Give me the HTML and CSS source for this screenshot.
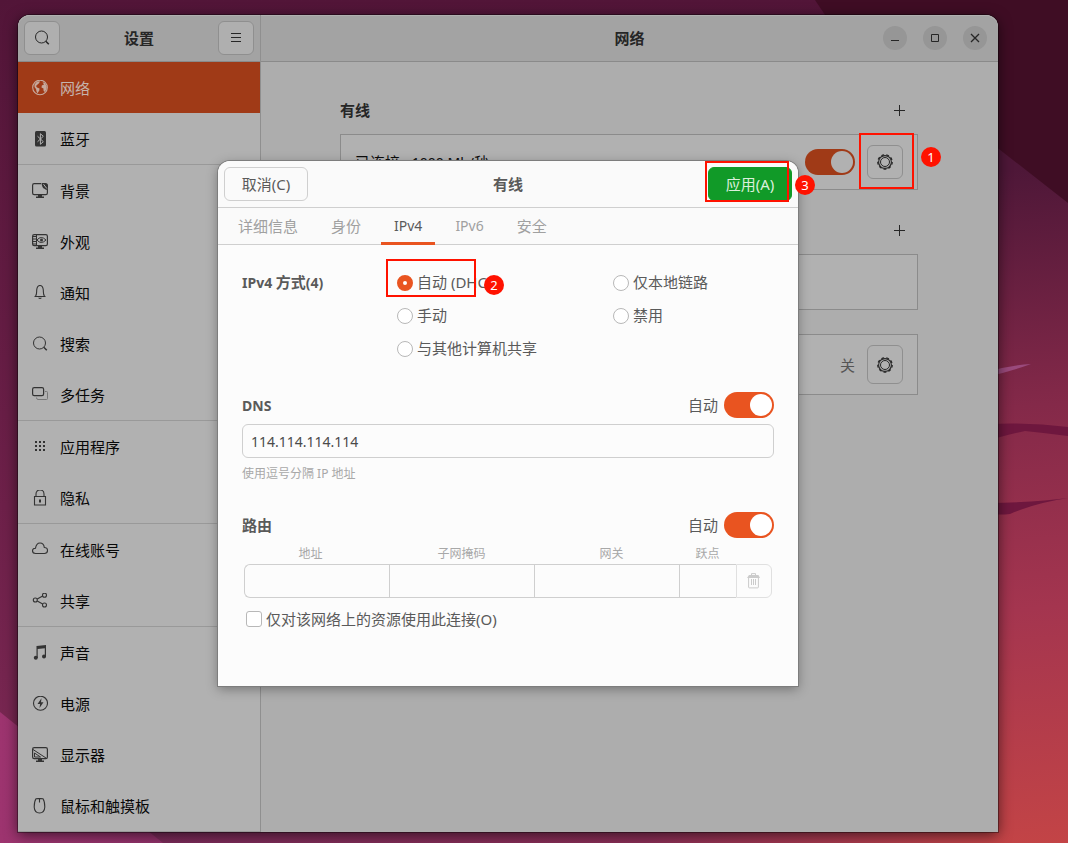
FILE: index.html
```html
<!DOCTYPE html>
<html lang="zh-CN">
<head>
<meta charset="utf-8">
<title>设置</title>
<link rel="stylesheet" href="styles.css">
</head>
<body>
<svg class="symbols" aria-hidden="true">
  <symbol id="gear" viewBox="0 0 16 16">
    <circle cx="8" cy="8" r="6.4" fill="none" stroke="currentColor" stroke-width="1.1"/>
    <circle cx="8" cy="8" r="4.5" fill="none" stroke="currentColor" stroke-width="1"/>
    <circle cx="8" cy="8" r="7.2" fill="none" stroke="currentColor" stroke-width="1.3" stroke-dasharray="2.8 2.226" stroke-dashoffset="-9.9"/>
  </symbol>
  <symbol id="search" viewBox="0 0 16 16">
    <g fill="none" stroke="currentColor"><circle cx="7.500" cy="7" r="6"/><path d="M11.800 11.300l3 3" stroke-width="1.500"/></g>
  </symbol>
</svg>
<div class="desktop">
  <svg class="wallpaper" viewBox="0 0 1068 843" preserveAspectRatio="xMidYMid slice" aria-hidden="true">
    <defs>
      <linearGradient id="base" x1="0" y1="0" x2="0" y2="1"><stop offset="0" stop-color="#521538"/><stop offset=".6" stop-color="#6d2049"/><stop offset="1" stop-color="#7d2a55"/></linearGradient>
      <linearGradient id="right" gradientUnits="userSpaceOnUse" x1="1010" y1="170" x2="1068" y2="843"><stop offset="0" stop-color="#4e1738"/><stop offset=".35" stop-color="#842949"/><stop offset=".65" stop-color="#a4354f"/><stop offset="1" stop-color="#c34446"/></linearGradient>
      <linearGradient id="bottom" x1="0" y1="0" x2="1" y2="0"><stop offset="0" stop-color="#782a59"/><stop offset=".6" stop-color="#8a2e56"/><stop offset="1" stop-color="#c34446"/></linearGradient>
      <linearGradient id="corner" x1="0" y1="0" x2="1" y2="0"><stop offset="0" stop-color="#9d346f"/><stop offset="1" stop-color="#91316a"/></linearGradient>
    </defs>
    <rect width="1068" height="843" fill="url(#base)"/>
    <path d="M815 0H1068V230H970Z" fill="#3f0d24"/>
    <path d="M100 815H1010V843H100Z" fill="url(#bottom)"/>
    <path d="M990 142L1068 203V843H990Z" fill="url(#right)"/>
    <path d="M0 712L163 843H0Z" fill="url(#corner)"/>
    <path d="M990 371Q1012 365 1031 364Q1012 371 990 376Z" fill="#9a4a7c"/>
    <path d="M990 424Q1030 422 1068 427V436Q1045 433 1025 431Q1010 434 990 440Z" fill="#6e173e"/>
    <path d="M990 503Q1040 502 1068 498Q1035 503 1010 514Q1000 515 990 514Z" fill="#6e173e"/>
  </svg>

  <div class="window">
    <aside class="sidebar">
      <header class="titlebar side-title">
        <button class="icon-button" aria-label="搜索"><svg class="icon"><use href="#search"/></svg></button>
        <h1 class="title">设置</h1>
        <button class="icon-button" aria-label="菜单"><svg class="icon" viewBox="0 0 16 16"><path d="M3 3.500h10M3 7.500h10M3 11.500h10" stroke="currentColor"/></svg></button>
      </header>
      <nav class="nav">
        <a class="nav-item active" href="#network"><svg class="icon" viewBox="0 0 16 16"><circle cx="8" cy="7.500" r="7.300" fill="none" stroke="currentColor" stroke-width="1.100"/><path fill="currentColor" d="M2.500 4.500L5 1.500 8 1.200 7 3.200 5.500 4.500 4 6 5 7.500 7.500 8.500 7.300 10.500 6 12.500 5.500 13.500 4.500 11.500 4 9 2.500 7ZM10.500 2.200L13 3 14.700 6.500 14.500 9.500 12.500 12 11.500 10.500 11.500 8.500 9.500 7.500 9.800 5.500 12 4.500Z"/></svg>网络</a>
        <a class="nav-item" href="#bluetooth"><svg class="icon" viewBox="0 0 16 16"><rect x="3" width="11" height="15.500" rx="1.500" fill="currentColor"/><path d="M5.500 5.200l5.800 5.500-2.900 2.600V2.700l2.900 2.600-5.800 5.500" fill="none" stroke="#b1b1b1"/></svg>蓝牙</a>
        <hr class="nav-separator">
        <a class="nav-item" href="#background"><svg class="icon" viewBox="0 0 16 16"><path d="M9 .6H2.200Q.6.600.6 2.200V10Q.6 11.600 2.200 11.600H13.800Q15.400 11.600 15.400 10V7" fill="none" stroke="currentColor" stroke-width="1.200"/><path d="M9.500 0H13.500Q16 0 16 2.500V7Q13.500 7 12.500 5.800 10 5 9.500 0ZM4 13.500h8V15H4ZM6 11.500h4v2.500H6Z" fill="currentColor"/><path d="M11.500 1.200l3.300 4.300" stroke="#b1b1b1"/></svg>背景</a>
        <a class="nav-item" href="#appearance"><svg class="icon" viewBox="0 0 16 16"><rect x=".6" y=".6" width="14.800" height="11" rx="1.600" fill="none" stroke="currentColor" stroke-width="1.200"/><path d="M1 2.500h3M1 5h3M1 7.500h3M1 10h3M4.500 1v11M5 6q4-5 9 0-5 5-9 0" fill="none" stroke="currentColor"/><circle cx="9.500" cy="6" r="1.500" fill="currentColor"/><path d="M4 13.500h8V15H4ZM6 12h4v2H6Z" fill="currentColor"/></svg>外观</a>
        <a class="nav-item" href="#notifications"><svg class="icon" viewBox="0 0 16 16"><path d="M2.500 11.500h11M3.500 11C5 9.500 4.500 7.500 4.700 5 5 2 6 .5 8 .5s3 1.500 3.300 4.500C11.500 7.500 11 9.500 12.500 11" fill="none" stroke="currentColor" stroke-width="1.100"/><path d="M6 12.800h4q-2 2.500-4 0" fill="currentColor"/></svg>通知</a>
        <a class="nav-item" href="#search-panel"><svg class="icon"><use href="#search"/></svg>搜索</a>
        <a class="nav-item" href="#multitasking"><svg class="icon" viewBox="0 0 16 16"><rect x=".6" y=".6" width="11" height="8" rx="1.600" fill="none" stroke="currentColor" stroke-width="1.200"/><path d="M13 4.500h1.500q1 0 1 1v6q0 1-1 1H6q-1.500 0-1.500-2" fill="none" stroke="#777"/></svg>多任务</a>
        <hr class="nav-separator">
        <a class="nav-item" href="#apps"><svg class="icon" viewBox="0 0 16 16"><path d="M3 3h11M3 7h11M3 11h11" stroke="currentColor" stroke-width="2" stroke-dasharray="2 2"/></svg>应用程序</a>
        <a class="nav-item" href="#privacy"><svg class="icon" viewBox="0 0 16 16"><path d="M2.500 6.500h11v8.500h-11ZM4 6.500V4C4 1.500 5.500 0 8 0S12 1.500 12 4V6.500" fill="none" stroke="currentColor" stroke-width="1.100"/><path d="M7 9.500h2v3H7Z" fill="currentColor"/></svg>隐私</a>
        <hr class="nav-separator">
        <a class="nav-item" href="#accounts"><svg class="icon" viewBox="0 0 16 16"><path d="M3.500 11.500C1.500 11.500.5 10.300.5 8.800S1.700 6.200 3.500 6.200C4 3 5.500 1 8 1s4 1.800 4.300 4.500c2 0 3.200 1.200 3.200 3s-1.200 3-3 3Z" fill="none" stroke="currentColor" stroke-width="1.100"/></svg>在线账号</a>
        <a class="nav-item" href="#sharing"><svg class="icon" viewBox="0 0 16 16"><g fill="none" stroke="currentColor" stroke-width="1.100"><circle cx="3.300" cy="7" r="2"/><circle cx="12.500" cy="2.200" r="2"/><circle cx="12.500" cy="12" r="2"/><path d="M5.200 6l5.500-3M5.200 8l5.500 3"/></g></svg>共享</a>
        <hr class="nav-separator">
        <a class="nav-item" href="#sound"><svg class="icon" viewBox="0 0 16 16"><path d="M4.500 1l9.500-1v12h-1.200V3.200L5.700 4v9H4.500Z" fill="currentColor"/><circle cx="3.800" cy="12.700" r="2" fill="currentColor"/><circle cx="12" cy="11.500" r="2" fill="currentColor"/></svg>声音</a>
        <a class="nav-item" href="#power"><svg class="icon" viewBox="0 0 16 16"><circle cx="8.500" cy="7.200" r="7" fill="none" stroke="currentColor" stroke-width="1.100"/><path d="M9.500 2.200L5.500 8h2.600L7.500 12l4-5.800H9Z" fill="currentColor"/></svg>电源</a>
        <a class="nav-item" href="#displays"><svg class="icon" viewBox="0 0 16 16"><rect x=".6" y=".6" width="14.800" height="11" rx="1.600" fill="none" stroke="currentColor" stroke-width="1.200"/><path d="M1 2.500l13 8.500M2.500 6v4h6Z" fill="none" stroke="currentColor"/><path d="M4 13.500h8V15H4ZM6 12h4v2H6Z" fill="currentColor"/></svg>显示器</a>
        <a class="nav-item" href="#mouse"><svg class="icon" viewBox="0 0 16 16"><path d="M4 .8Q7.500.2 11 .8 12.800 3.500 12.800 9 12.500 15 7.500 15T2.200 9Q2.200 3.500 4 .8ZM7.500.5v4" fill="none" stroke="currentColor" stroke-width="1.100"/></svg>鼠标和触摸板</a>
        <hr class="nav-separator">
      </nav>
    </aside>

    <main class="main">
      <header class="titlebar main-title">
        <h2 class="title">网络</h2>
        <div class="controls">
          <button class="control" aria-label="最小化"><svg class="icon" viewBox="0 0 16 16"><path d="M4 10.500h8" stroke="currentColor"/></svg></button>
          <button class="control" aria-label="最大化"><svg class="icon" viewBox="0 0 16 16"><path d="M4.500 4.500h7v7h-7Z" fill="none" stroke="currentColor"/></svg></button>
          <button class="control" aria-label="关闭"><svg class="icon" viewBox="0 0 16 16"><path d="M4 4l8 8M12 4l-8 8" stroke="currentColor" stroke-width="1.300"/></svg></button>
        </div>
      </header>
      <div class="panel">
        <div class="group-head">
          <h3 class="group-title">有线</h3>
          <button class="add" aria-label="添加有线连接"><svg class="icon" viewBox="0 0 16 16"><path d="M2 8.500h11M7.500 3v11" stroke="currentColor"/></svg></button>
        </div>
        <div class="device">
          <span class="device-name">已连接<span class="latin"> - 1000 Mb/</span>秒</span>
          <input class="switch dimmed" type="checkbox" role="switch" aria-label="有线" checked>
          <span class="marked">
            <button class="gear-button" aria-label="有线选项"><svg class="icon"><use href="#gear"/></svg></button>
            <span class="mark mark-gear"></span><span class="badge badge-gear">1</span>
          </span>
        </div>
        <div class="group-head second">
          <button class="add" aria-label="添加连接"><svg class="icon" viewBox="0 0 16 16"><path d="M2 8.500h11M7.500 3v11" stroke="currentColor"/></svg></button>
        </div>
        <div class="device"></div>
        <div class="device proxy">
          <span class="state">关</span>
          <button class="gear-button" aria-label="选项"><svg class="icon"><use href="#gear"/></svg></button>
        </div>
      </div>
    </main>

    <section class="dialog" role="dialog" aria-labelledby="dialog-title">
      <header class="dialog-head">
        <button class="button">取消(C)</button>
        <h2 class="title" id="dialog-title">有线</h2>
        <span class="marked apply-slot">
          <button class="button apply">应用(A)</button>
          <span class="mark mark-apply"></span><span class="badge badge-apply">3</span>
        </span>
      </header>
      <div class="tabs" role="tablist">
        <button class="tab" role="tab">详细信息</button>
        <button class="tab" role="tab">身份</button>
        <button class="tab latin selected" role="tab" aria-selected="true">IPv4</button>
        <button class="tab latin" role="tab">IPv6</button>
        <button class="tab" role="tab">安全</button>
      </div>
      <div class="dialog-body">
        <div class="methods" role="radiogroup" aria-labelledby="method-label">
          <h3 class="label" id="method-label"><span class="latin">IPv4 </span>方式<span class="latin">(4)</span></h3>
          <div class="marked">
            <label class="option short"><input class="radio" type="radio" name="method" checked>自动 (DHC</label>
            <span class="mark mark-auto"></span><span class="badge badge-auto">2</span>
          </div>
          <label class="option"><input class="radio" type="radio" name="method">仅本地链路</label>
          <label class="option manual"><input class="radio" type="radio" name="method">手动</label>
          <label class="option"><input class="radio" type="radio" name="method">禁用</label>
          <label class="option manual"><input class="radio" type="radio" name="method">与其他计算机共享</label>
        </div>

        <div class="field-head">
          <h3 class="label latin">DNS</h3>
          <label class="auto">自动<input class="switch" type="checkbox" role="switch" checked></label>
        </div>
        <input class="entry" type="text" value="114.114.114.114" aria-label="DNS" aria-describedby="dns-hint">
        <p class="hint" id="dns-hint">使用逗号分隔 IP 地址</p>

        <div class="field-head">
          <h3 class="label">路由</h3>
          <label class="auto">自动<input class="switch" type="checkbox" role="switch" checked></label>
        </div>
        <table class="routes">
          <colgroup><col><col><col><col class="metric-col"><col class="delete-col"></colgroup>
          <thead><tr><th class="lead">地址</th><th>子网掩码</th><th class="trail">网关</th><th>跃点</th><td></td></tr></thead>
          <tbody><tr>
            <td><input class="cell first" type="text" aria-label="地址"></td>
            <td><input class="cell" type="text" aria-label="子网掩码"></td>
            <td><input class="cell" type="text" aria-label="网关"></td>
            <td><input class="cell" type="text" aria-label="跃点"></td>
            <td><button class="delete" aria-label="删除" disabled><svg class="icon" viewBox="0 0 16 16"><path d="M5.500 2.500V.6h4v1.900M2.600 5v9q0 .9.900.9h8q.9 0 .9-.9V5M5.500 6v6M7.500 6v6M9.500 6v6" fill="none" stroke="currentColor"/><path d="M3 2h9.500L14 5H1Z" fill="currentColor"/></svg></button></td>
          </tr></tbody>
        </table>
        <label class="check-row"><input class="check" type="checkbox">仅对该网络上的资源使用此连接(O)</label>
      </div>
    </section>
  </div>
</div>
</body>
</html>
```
FILE: styles.css
```css
* { box-sizing: border-box; }

body {
  margin: 0;
  font: 15px/22px "Noto Sans", "Noto Sans CJK SC", sans-serif;
  color: #0c0c0c;
}

h1, h2, h3, p { margin: 0; }

button, input { font: inherit; color: inherit; }

button { padding: 0; border: 0; background: none; }

.symbols { position: absolute; width: 0; height: 0; }

.icon { display: block; width: 16px; height: 16px; flex: none; }

.desktop {
  position: relative;
  display: flex;
  min-height: 100vh;
  padding: 15px 70px 11px 18px;
  overflow: hidden;
}

.wallpaper { position: absolute; inset: 0; width: 100%; height: 100%; }

/* Settings window */
.window {
  position: relative;
  flex: 1;
  display: grid;
  grid-template-columns: 243px 1fr;
  align-items: stretch;
  border-radius: 12px 12px 0 0;
  background: #adadad;
  box-shadow: 0 0 0 1px rgba(0, 0, 0, .35), 0 3px 14px rgba(0, 0, 0, .6);
}

.sidebar {
  grid-area: 1 / 1;
  border-right: 1px solid #8f8f8f;
  border-radius: 12px 0 0 0;
  background: #b1b1b1;
}

.main { grid-area: 1 / 2; }

.titlebar {
  display: flex;
  align-items: center;
  height: 47px;
  padding: 0 6px;
  border-bottom: 1px solid #8a8a8a;
  background: #a3a3a3;
  box-shadow: inset 0 1px #b0b0b0;
  color: #262626;
}

.side-title { justify-content: space-between; border-radius: 12px 0 0 0; }

.main-title { position: relative; justify-content: center; border-radius: 0 12px 0 0; }

.title { font-size: 15px; font-weight: 700; line-height: 22px; }

.icon-button {
  display: grid;
  place-items: center;
  width: 36px;
  height: 34px;
  border: 1px solid #8f8f8f;
  border-radius: 6px;
  background: #afafaf;
}

.controls { position: absolute; right: 11px; display: flex; gap: 16px; }

.control {
  display: grid;
  place-items: center;
  width: 24px;
  height: 24px;
  border-radius: 50%;
  background: #969696;
}

.nav-item {
  display: flex;
  align-items: center;
  gap: 12px;
  height: 51px;
  padding: 0 14px;
  color: #080808;
  text-decoration: none;
}

.nav-item .icon { color: #333; }

.nav-item.active { background: #a03a17; color: #c6b4ad; }

.nav-item.active .icon { color: #c6a99d; }

.nav-separator { height: 1px; margin: 0; border: 0; background: #999; }

.panel { width: 100%; max-width: 627px; margin: 0 auto; padding: 24px 25px 24px 24px; }

.group-head {
  display: flex;
  align-items: center;
  height: 48px;
  padding-right: 10px;
}

.group-head.second { margin-top: 16px; }

.group-title { font-size: 15px; color: #262626; }

.add { margin-left: auto; }

.add, .control, .gear-button { color: #262626; }

.device {
  display: flex;
  align-items: center;
  gap: 12px;
  min-height: 56px;
  padding: 10px 14px;
  border: 1px solid #8b8b8b;
  background: #b1b1b1;
}

.device.proxy { min-height: 61px; margin-top: 24px; }

.device-name { margin-right: auto; }

.latin { font-size: 14px; }

.state { margin-left: auto; color: #555; }

.gear-button {
  display: grid;
  place-items: center;
  align-self: stretch;
  width: 36px;
  min-height: 34px;
  border: 1px solid #8f8f8f;
  border-radius: 6px;
}

.switch {
  appearance: none;
  display: block;
  flex: none;
  width: 50px;
  height: 26px;
  margin: 0;
  padding: 2px;
  border-radius: 13px;
  background: #e95420;
}

.switch::before {
  content: "";
  display: block;
  width: 22px;
  height: 22px;
  margin-left: auto;
  border-radius: 50%;
  background: #fff;
}

.switch.dimmed { background: #a03a17; }

.switch.dimmed::before { background: #b1b1b1; }

/* Step markers lying over the controls */
.marked { position: relative; }

.mark { position: absolute; border: 2px solid #ff1200; pointer-events: none; }

.badge {
  position: absolute;
  width: 20px;
  height: 20px;
  border-radius: 50%;
  background: #ff1200;
  color: #fff;
  font-size: 13px;
  line-height: 20px;
  text-align: center;
}

.mark-gear { inset: -12px -11px -10px -8px; }
.badge-gear { left: 54px; top: 2px; }
.mark-auto { left: -11px; top: -7px; width: 90px; height: 38px; }
.badge-auto { left: 87px; top: 9px; }
.mark-apply { inset: -6px 3px -1px -3px; }
.badge-apply { right: -23px; top: 8px; }

/* Connection editor */
.dialog {
  grid-area: 1 / 1 / 2 / 3;
  place-self: center;
  position: relative;
  width: 100%;
  max-width: 580px;
  border-radius: 12px 12px 0 0;
  background: #fcfcfc;
  color: #5a5a5a;
  box-shadow: 0 0 0 1px #7d7d7d, 0 3px 12px rgba(0, 0, 0, .35);
}

.dialog-head {
  display: grid;
  grid-template-columns: 1fr auto 1fr;
  align-items: center;
  height: 47px;
  padding: 0 6px;
  border-bottom: 1px solid #cfcfcf;
  border-radius: 12px 12px 0 0;
  background: #fafafa;
}

.button {
  display: block;
  width: 84px;
  height: 34px;
  border: 1px solid #cfcfcf;
  border-radius: 6px;
}

.button.apply { border-color: #119a28; background: #119a28; color: #dcefdc; }

.apply-slot { justify-self: end; }

.tabs {
  display: flex;
  gap: 7px;
  height: 37px;
  padding: 0 7px;
  border-bottom: 1px solid #cfcfcf;
  background: #fafafa;
}

.tab {
  height: 37px;
  padding: 1px 13px 0;
  border-bottom: 3px solid transparent;
  color: #a0a0a0;
}

.tab.selected { border-color: #e95420; color: #5a5a5a; }

.dialog-body { padding: 21px 24px 56px; }

.methods {
  display: grid;
  grid-template-columns: 155px 216px 1fr;
  grid-auto-rows: 33px;
  margin-bottom: 27px;
}

.label { font-size: 15px; line-height: 33px; }

.label.latin { font-size: 14px; }

.option { display: flex; align-items: center; gap: 4px; height: 33px; line-height: 33px; white-space: nowrap; }

.option.short { width: 90px; overflow: hidden; }

.option.manual { grid-column: 2; }

.radio, .check {
  appearance: none;
  flex: none;
  width: 16px;
  height: 16px;
  margin: 0;
  border: 1px solid #b8b8b8;
  background: #fff;
}

.radio { border-radius: 50%; }

.radio:checked { border: 6px solid #e95420; }

.check { border-radius: 3px; }

.field-head { display: flex; align-items: center; justify-content: space-between; height: 26px; }

.auto { display: flex; align-items: center; gap: 6px; }

.entry {
  display: block;
  width: 100%;
  height: 34px;
  margin-top: 6px;
  padding: 0 8px;
  border: 1px solid #cfcfcf;
  border-radius: 6px;
  background: #fcfcfc;
  color: #4a4a4a;
  font-size: 14px;
}

.hint { margin: 7px 0 29px; color: #a8a8a8; font-size: 12px; line-height: 18px; }

.routes {
  width: calc(100% - 4px);
  margin: 6px 2px 0;
  border-spacing: 0;
  table-layout: fixed;
}

.metric-col { width: 57px; }

.delete-col { width: 36px; }

.routes th {
  height: 20px;
  padding: 0;
  color: #a8a8a8;
  font-size: 12px;
  font-weight: 400;
  line-height: 20px;
}

.routes th.lead { padding-right: 12px; }

.routes th.trail { padding-left: 10px; }

.routes td { padding: 0; }

.cell {
  display: block;
  width: 100%;
  height: 34px;
  padding: 0 8px;
  border: 1px solid #cfcfcf;
  border-right: 0;
  background: #fcfcfc;
}

.cell.first { border-radius: 6px 0 0 6px; }

.delete {
  display: grid;
  place-items: center;
  width: 100%;
  height: 34px;
  border: 1px solid #e0e0e0;
  border-radius: 0 6px 6px 0;
  color: #cbcbcb;
}

.check-row { display: flex; align-items: center; gap: 4px; margin: 10px 4px 0; }
```
